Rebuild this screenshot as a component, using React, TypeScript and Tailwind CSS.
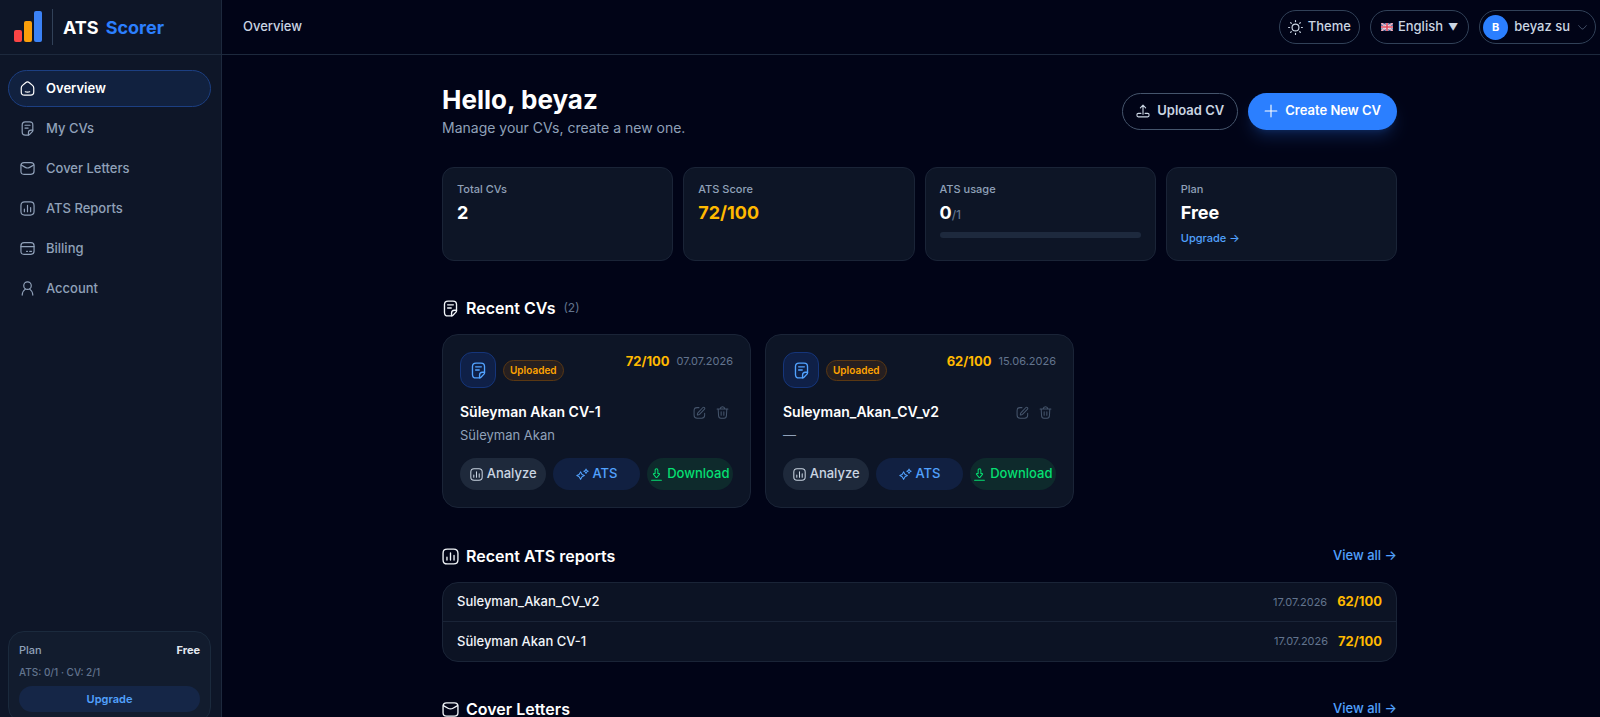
import type { ReactNode } from "react";

type IconProps = { className?: string; children?: ReactNode };

function Icon({ className = "size-4", children }: IconProps) {
  return (
    <svg
      viewBox="0 0 24 24"
      fill="none"
      stroke="currentColor"
      strokeWidth="1.9"
      strokeLinecap="round"
      strokeLinejoin="round"
      aria-hidden="true"
      className={`shrink-0 ${className}`}
    >
      {children}
    </svg>
  );
}

const HomeIcon = ({ className }: IconProps) => (
  <Icon className={className}>
    <path d="M2 11c0-1.800.5-2.700 2-4l5-4.300c2-1.600 4-1.600 6 0L20 7c1.500 1.300 2 2.200 2 4v6.500c0 3.500-1.500 5-5 5H7c-3.500 0-5-1.500-5-5z" />
    <path d="M8.500 17.200c2 .8 5 .8 7 0" />
  </Icon>
);

const NoteIcon = ({ className }: IconProps) => (
  <Icon className={className}>
    <path d="M20.500 14V6.500c0-3.500-1.500-5-5-5h-7c-3.500 0-5 1.500-5 5v11c0 3.500 1.500 5 5 5H13c1 0 1.800-.4 2.500-1.100l3.900-3.900c.7-.7 1.100-1.500 1.100-2.500z" />
    <path d="M13.500 22.300V18.500c0-2.800 1.200-4 4-4h3M8 6.800h8M8 11.300h5" />
  </Icon>
);

const MailIcon = ({ className }: IconProps) => (
  <Icon className={className}>
    <path d="M1.500 7.500c0-3.500 1.500-4.800 5-4.800h11c3.500 0 5 1.300 5 4.800v9c0 3.500-1.500 4.800-5 4.800h-11c-3.500 0-5-1.300-5-4.800z" />
    <path d="M2 6.500 8.500 10.200c2.300 1.300 4.700 1.300 7 0L22 6.500" />
  </Icon>
);

const ChartIcon = ({ className }: IconProps) => (
  <Icon className={className}>
    <path d="M1.500 7.500c0-4.200 1.800-6 6-6h9c4.200 0 6 1.800 6 6v9c0 4.200-1.800 6-6 6h-9c-4.200 0-6-1.800-6-6z" />
    <path d="M7 13v4M12 7v10M17 10.500V17" />
  </Icon>
);

const CardIcon = ({ className }: IconProps) => (
  <Icon className={className}>
    <path d="M1.500 7.500c0-3.500 1.500-4.800 5-4.800h11c3.500 0 5 1.300 5 4.800v9c0 3.500-1.500 4.800-5 4.800h-11c-3.500 0-5-1.300-5-4.800z" />
    <path d="M1.500 9h21M10.500 16.500H12M15.500 16.500h3" />
  </Icon>
);

const UserIcon = ({ className }: IconProps) => (
  <Icon className={className}>
    <circle cx="12" cy="7.500" r="6" />
    <path d="M3.500 22.500c.2-4 2-7.500 5-9.500M20.500 22.500c-.2-4-2-7.500-5-9.500" />
  </Icon>
);

const UploadIcon = ({ className }: IconProps) => (
  <Icon className={className}>
    <path d="M12 17.500V2.500M7.500 6.500 12 2l4.500 4.500" />
    <path d="M8.500 16H4c-3.300 0-3.300 6 0 6h16c3.300 0 3.300-6 0-6h-4.500" />
  </Icon>
);

const PlusIcon = ({ className }: IconProps) => (
  <Icon className={className}>
    <path d="M12 2v20M2 12h20" />
  </Icon>
);

const SunIcon = ({ className }: IconProps) => (
  <Icon className={className}>
    <circle cx="12" cy="12" r="5.500" />
    <path d="M12 1v1.500M12 21.500V23M1 12h1.500M21.500 12H23M4.200 4.200l1 1M18.800 18.800l1 1M19.800 4.200l-1 1M5.200 18.800l-1 1" />
  </Icon>
);

const SparkleIcon = ({ className }: IconProps) => (
  <Icon className={className}>
    <path d="M8.500 7c1.200 4.500 2.500 5.800 7 7-4.500 1.200-5.800 2.500-7 7-1.200-4.500-2.500-5.800-7-7 4.500-1.200 5.800-2.500 7-7z" />
    <path d="M18.500 2c.6 2.500 1.500 3.400 4 4-2.500.6-3.400 1.500-4 4-.6-2.500-1.500-3.400-4-4 2.500-.6 3.400-1.500 4-4z" />
  </Icon>
);

const DownloadIcon = ({ className }: IconProps) => (
  <Icon className={className}>
    <path d="M9.500 10V4a2.500 2.500 0 0 1 5 0v6h2c1.200 0 1.600 1 .9 1.900L13.300 16.800c-.8.900-1.800.9-2.600 0l-4.100-4.900c-.7-.9-.3-1.900.9-1.900zM3 22.500h18" />
  </Icon>
);

const EditIcon = ({ className }: IconProps) => (
  <Icon className={className}>
    <path d="M11 3H7.500C4 3 2 4.800 2 8.500V17c0 3.700 1.800 5.500 5.500 5.500H16c3.700 0 5.500-1.800 5.500-5.500v-3.500" />
    <path d="m9 12.500 9.300-9.700c1.700-1.700 4.700 1.200 3 2.900L12 15.500c-1 1-2.500 1-4 1 0-1.500 0-3 1-4z" />
  </Icon>
);

const TrashIcon = ({ className }: IconProps) => (
  <Icon className={className}>
    <path d="M2 5.500h20M7.500 5.500C8 2.500 9.300 1.500 12 1.500s4 1 4.500 4M4 5.500l.7 12c.2 3.500 1.300 5 4.500 5h5.600c3.200 0 4.300-1.500 4.500-5l.7-12M9.500 10.500v6.500M14.500 10.500v6.500" />
  </Icon>
);

const ChevronIcon = ({ className }: IconProps) => (
  <Icon className={className}>
    <path d="M2 7c3.500 4 7 9 10 9s6.500-5 10-9" />
  </Icon>
);

function UkFlag() {
  return (
    <svg viewBox="0 0 24 16" aria-hidden="true" className="h-2 w-3 shrink-0">
      <path fill="#3b4a86" d="M0 0h24v16H0z" />
      <path stroke="#f1f1f6" strokeWidth="3.400" d="m0 0 24 16M24 0 0 16" />
      <path stroke="#e0475b" strokeWidth="1.300" d="m0 0 24 16M24 0 0 16" />
      <path stroke="#f1f1f6" strokeWidth="5.500" d="M12 0v16M0 8h24" />
      <path stroke="#e0475b" strokeWidth="3.200" d="M12 0v16M0 8h24" />
    </svg>
  );
}

function LogoMark() {
  return (
    <svg viewBox="0 0 28 32" aria-hidden="true" className="h-8 w-7 shrink-0">
      <rect x="0" y="19" width="8" height="12" rx="2" fill="#fb4545" />
      <rect x="10" y="10" width="8" height="21" rx="2" fill="#fb9f0a" />
      <rect x="20" y="0" width="8" height="31" rx="2" fill="#3b82f6" />
    </svg>
  );
}

const navItems = [
  { label: "Overview", icon: HomeIcon, active: true },
  { label: "My CVs", icon: NoteIcon },
  { label: "Cover Letters", icon: MailIcon },
  { label: "ATS Reports", icon: ChartIcon },
  { label: "Billing", icon: CardIcon },
  { label: "Account", icon: UserIcon },
];

const cvs = [
  { title: "Süleyman Akan CV-1", owner: "Süleyman Akan", score: 72, date: "07.07.2026" },
  { title: "Suleyman_Akan_CV_v2", owner: "—", score: 62, date: "15.06.2026" },
];

const reports = [
  { title: "Suleyman_Akan_CV_v2", score: 62, date: "17.07.2026" },
  { title: "Süleyman Akan CV-1", score: 72, date: "17.07.2026" },
];

function Sidebar() {
  return (
    <aside className="flex h-[calc(100vh+14px)] w-[222px] shrink-0 flex-col border-r border-slate-800 bg-[#0e1628]">
      <div className="flex h-[55px] shrink-0 items-center border-b border-slate-800 pl-[14px]">
        <LogoMark />
        <span className="ml-[10px] h-9 w-px bg-slate-700" />
        <span className="ml-[10px] flex gap-[7px] text-[18px] font-bold text-white">
          ATS <span className="text-blue-500">Scorer</span>
        </span>
      </div>
      <nav className="flex flex-col gap-[3px] pt-[15px] pr-[10px] pl-2">
        {navItems.map(({ label, icon: Glyph, active }) => (
          <a
            key={label}
            href="#"
            aria-current={active ? "page" : undefined}
            className={
              active
                ? "flex h-[37px] items-center gap-[11px] rounded-full border border-[#1c3f82] bg-[#11213f] px-[11px] font-semibold text-white"
                : "flex h-[37px] items-center gap-[11px] rounded-full border border-transparent px-[11px] font-medium text-slate-400"
            }
          >
            <Glyph className="size-[15px]" />
            {label}
          </a>
        ))}
      </nav>
      <section className="mt-auto mr-[10px] mb-2 ml-2 rounded-2xl border border-[#1b2a3d] bg-[#121c2e] px-[10px] py-[10px]">
        <div className="flex items-center justify-between text-[11px] leading-4">
          <span className="font-medium text-slate-400">Plan</span>
          <span className="font-bold text-slate-200">Free</span>
        </div>
        <p className="mt-[6px] text-[10px] leading-4 font-medium text-slate-500">ATS: 0/1 · CV: 2/1</p>
        <a
          href="#"
          className="mt-[6px] flex h-[26px] items-center justify-center rounded-full bg-[#152647] text-[11px] font-semibold text-blue-400"
        >
          Upgrade
        </a>
      </section>
    </aside>
  );
}

function TopBar() {
  return (
    <header className="flex h-[55px] items-center justify-between border-b border-slate-800 pr-1 pl-[21px] font-medium text-slate-300">
      <span>Overview</span>
      <div className="flex gap-[10px]">
        <button type="button" className="flex h-[34px] items-center gap-[5px] rounded-full border border-slate-700 px-2">
          <SunIcon className="size-[15px]" />
          Theme
        </button>
        <button type="button" className="flex h-[34px] items-center gap-[5px] rounded-full border border-slate-700 px-[10px]">
          <UkFlag />
          English <span className="text-[10px]">▼</span>
        </button>
        <button type="button" className="flex h-[34px] items-center rounded-full border border-slate-700 pr-2 pl-[3px]">
          <span className="flex size-[25px] items-center justify-center rounded-full bg-[#2b7fff] text-[11px] font-bold text-white">
            B
          </span>
          <span className="mr-2 ml-[6px]">beyaz su</span>
          <ChevronIcon className="size-[9px] text-slate-500" />
        </button>
      </div>
    </header>
  );
}

function StatCard({ label, children }: { label: string; children: ReactNode }) {
  return (
    <div className="h-[94px] rounded-xl border border-[#1a2437] bg-[#0d1526] px-[14px] py-[13px]">
      <p className="text-[11px] leading-4 font-medium text-slate-400">{label}</p>
      {children}
    </div>
  );
}

function CvCard({ title, owner, score, date }: (typeof cvs)[number]) {
  return (
    <article className="rounded-2xl border border-[#1a2437] bg-[#0d1526] p-[17px]">
      <div className="flex items-start justify-between">
        <div className="flex items-center gap-[7px]">
          <span className="flex size-9 items-center justify-center rounded-xl border border-[#15357a] bg-[#0f2047] text-blue-400">
            <NoteIcon className="size-[17px]" />
          </span>
          <span className="flex h-[21px] items-center rounded-full border border-[#5a3813] bg-[#261f20] px-[6px] text-[10px] font-semibold text-[#ffa400]">
            Uploaded
          </span>
        </div>
        <p className="flex items-center gap-[7px] leading-[19px]">
          <span className="font-bold text-[#ffb900]">{score}/100</span>
          <span className="text-[11px] text-slate-500">{date}</span>
        </p>
      </div>
      <div className="mt-[13px] flex items-center justify-between">
        <h3 className="text-[14px] leading-[22px] font-semibold text-white">{title}</h3>
        <div className="flex gap-[10px] pr-1 text-slate-600">
          <button type="button" aria-label="Edit">
            <EditIcon className="size-[13px]" />
          </button>
          <button type="button" aria-label="Delete">
            <TrashIcon className="size-[13px]" />
          </button>
        </div>
      </div>
      <p className="mt-[2px] leading-5 text-slate-400">{owner}</p>
      <div className="mt-[13px] grid grid-cols-3 gap-[7px] font-medium">
        <button type="button" className="flex h-8 items-center justify-center gap-1 rounded-full bg-[#1e293b] text-slate-300">
          <ChartIcon className="size-[13px]" />
          Analyze
        </button>
        <button type="button" className="flex h-8 items-center justify-center gap-1 rounded-full bg-[#112041] text-blue-400">
          <SparkleIcon className="size-[13px]" />
          ATS
        </button>
        <button type="button" className="flex h-8 items-center justify-center gap-1 rounded-full bg-[#0e2a2c] text-[#05df72]">
          <DownloadIcon className="size-[13px]" />
          Download
        </button>
      </div>
    </article>
  );
}

function SectionTitle({ icon, title, children }: { icon: ReactNode; title: string; children?: ReactNode }) {
  return (
    <div className="flex h-6 items-center">
      <span className="text-slate-100">{icon}</span>
      <h2 className="ml-[7px] text-[16px] font-semibold text-white">{title}</h2>
      {children}
    </div>
  );
}

function ViewAll() {
  return (
    <a href="#" className="ml-auto font-medium text-blue-400">
      View all →
    </a>
  );
}

export default function App() {
  return (
    <div className="flex h-screen overflow-hidden bg-[#010417] font-['Inter',sans-serif] text-[13px] text-slate-300">
      <Sidebar />
      <div className="min-w-0 flex-1">
        <TopBar />
        <main className="pl-[17px]">
          <div className="mx-auto max-w-[955px] pt-[28px]">
            <div className="flex items-center justify-between">
              <div>
                <h1 className="text-[26px] leading-[34px] font-bold text-white">Hello, beyaz</h1>
                <p className="text-[14px] leading-[22px] text-slate-400">Manage your CVs, create a new one.</p>
              </div>
              <div className="flex gap-[10px]">
                <button
                  type="button"
                  className="flex h-[37px] items-center gap-[7px] rounded-full border border-slate-600 px-[13px] font-semibold text-slate-300"
                >
                  <UploadIcon className="size-[14px]" />
                  Upload CV
                </button>
                <button
                  type="button"
                  className="flex h-[37px] items-center gap-[7px] rounded-full bg-[#2b7fff] px-4 font-semibold text-white shadow-lg shadow-blue-500/20"
                >
                  <PlusIcon className="size-[14px]" />
                  Create New CV
                </button>
              </div>
            </div>

            <div className="mt-[28px] grid grid-cols-4 gap-[10px]">
              <StatCard label="Total CVs">
                <p className="mt-[3px] text-[18px] leading-[26px] font-bold text-white">2</p>
              </StatCard>
              <StatCard label="ATS Score">
                <p className="mt-[3px] text-[18px] leading-[26px] font-bold text-[#ffb900]">72/100</p>
              </StatCard>
              <StatCard label="ATS usage">
                <p className="mt-[3px] text-[18px] leading-[26px] font-bold text-white">
                  0<span className="text-[12px] font-medium text-slate-500">/1</span>
                </p>
                <div className="mt-1 h-[6px] rounded-full bg-slate-800" />
              </StatCard>
              <StatCard label="Plan">
                <p className="mt-[3px] text-[18px] leading-[26px] font-bold text-white">Free</p>
                <a href="#" className="mt-1 block text-[11px] leading-4 font-medium text-blue-400">
                  Upgrade →
                </a>
              </StatCard>
            </div>

            <section className="mt-[35px]">
              <SectionTitle icon={<NoteIcon className="size-[17px]" />} title="Recent CVs">
                <span className="ml-2 text-[12px] text-slate-500">(2)</span>
              </SectionTitle>
              <div className="mt-[14px] grid grid-cols-3 gap-[14px]">
                {cvs.map((cv) => (
                  <CvCard key={cv.title} {...cv} />
                ))}
              </div>
            </section>

            <section className="mt-[36px]">
              <SectionTitle icon={<ChartIcon className="size-[17px]" />} title="Recent ATS reports">
                <ViewAll />
              </SectionTitle>
              <ul className="mt-[14px] divide-y divide-[#1a2437] rounded-2xl border border-[#1a2437] bg-[#0c1324]">
                {reports.map((report) => (
                  <li key={report.title} className="flex h-[39px] items-center px-[14px]">
                    <span className="font-medium text-slate-100">{report.title}</span>
                    <span className="ml-auto text-[11px] text-slate-500">{report.date}</span>
                    <span className="ml-[10px] font-bold text-[#ffb900]">{report.score}/100</span>
                  </li>
                ))}
              </ul>
            </section>

            <section className="mt-[35px]">
              <SectionTitle icon={<MailIcon className="size-[17px]" />} title="Cover Letters">
                <ViewAll />
              </SectionTitle>
            </section>
          </div>
        </main>
      </div>
    </div>
  );
}
